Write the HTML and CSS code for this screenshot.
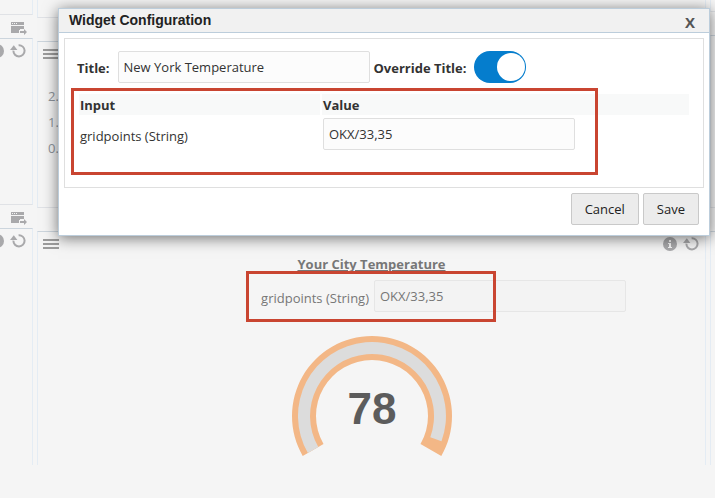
FILE: index.html
```html
<!DOCTYPE html>
<html lang="en">
<head>
    <meta charset="UTF-8">
    <meta name="viewport" content="width=device-width, initial-scale=1.0">
    <title>Widget Configuration</title>
    <link rel="stylesheet" href="styles.css">
</head>
<body>
    <svg class="sprite" aria-hidden="true">
        <symbol id="refresh" viewBox="0 0 16 14">
            <path d="M8.6 1.2a5.6 5.6 0 1 1-5.2 5.4" fill="none" stroke="currentColor" stroke-width="2"/>
            <path d="M0 6L3.8 1.2 7.4 6z" fill="currentColor"/>
        </symbol>
        <symbol id="info" viewBox="0 0 14 14">
            <circle cx="7" cy="7" r="7" fill="currentColor"/>
            <path d="M6 3h2v2H6zM5 6h3v4h1v1H5v-1h1V7H5z" fill="#f5f5f5"/>
        </symbol>
        <symbol id="menu" viewBox="0 0 16 10">
            <path d="M0 1h16M0 5h16M0 9h16" stroke="currentColor" stroke-width="2"/>
        </symbol>
        <symbol id="popout" viewBox="0 0 16 13">
            <path d="M0 0h13v3H0zM0 4h13v3H9v1H8v3H0z" fill="currentColor"/>
            <path d="M1 1h1v1H1zM3 1h1v1H3zM5 1h1v1H5z" fill="#f5f5f5"/>
            <path d="M9 9h4V7l3 3-3 3v-2H9z" fill="currentColor"/>
        </symbol>
    </svg>

    <main class="dashboard">
        <div class="column column-left">
            <section class="widget stub"></section>
            <div class="widget-bar">
                <button class="icon-btn" aria-label="Open"><svg width="16" height="13"><use href="#popout"/></svg></button>
            </div>
            <section class="widget medium">
                <div class="tools">
                    <button class="icon-btn" aria-label="Info"><svg width="14" height="14"><use href="#info"/></svg></button>
                    <button class="icon-btn" aria-label="Refresh"><svg width="16" height="14"><use href="#refresh"/></svg></button>
                </div>
            </section>
            <div class="widget-bar">
                <button class="icon-btn" aria-label="Open"><svg width="16" height="13"><use href="#popout"/></svg></button>
            </div>
            <section class="widget last">
                <div class="tools">
                    <button class="icon-btn" aria-label="Info"><svg width="14" height="14"><use href="#info"/></svg></button>
                    <button class="icon-btn" aria-label="Refresh"><svg width="16" height="14"><use href="#refresh"/></svg></button>
                </div>
            </section>
        </div>

        <div class="column column-main">
            <section class="widget stub"></section>
            <div class="widget-bar"></div>
            <section class="widget medium">
                <div class="tools">
                    <button class="icon-btn menu" aria-label="Menu"><svg width="16" height="10"><use href="#menu"/></svg></button>
                </div>
                <div class="axis">
                    <span>2.4</span>
                    <span>1.6</span>
                    <span>0.8</span>
                </div>
            </section>
            <div class="widget-bar"></div>
            <section class="widget last">
                <div class="tools">
                    <button class="icon-btn menu" aria-label="Menu"><svg width="16" height="10"><use href="#menu"/></svg></button>
                    <button class="icon-btn" aria-label="Info"><svg width="14" height="14"><use href="#info"/></svg></button>
                    <button class="icon-btn" aria-label="Refresh"><svg width="16" height="14"><use href="#refresh"/></svg></button>
                </div>
                <h2 class="widget-title">Your City Temperature</h2>
                <div class="param">
                    <label for="city-gridpoints">gridpoints (String)</label>
                    <input type="text" class="text-input" id="city-gridpoints" value="OKX/33,35">
                    <div class="highlight highlight-param"></div>
                </div>
                <svg class="gauge" width="160" height="120" viewBox="0 0 160 120" role="img" aria-label="78">
                    <path d="M10.7 120A80 80 0 1 1 149.3 120L128.5 108A56 56 0 1 0 31.5 108z" fill="#f3b786"/>
                    <path d="M15.9 117A74 74 0 1 1 149.5 105.3L138.3 101.2A62 62 0 1 0 26.3 111z" fill="#dcdcdc"/>
                    <text x="80" y="88" text-anchor="middle">78</text>
                </svg>
            </section>
        </div>

        <div class="column column-right">
            <section class="widget stub"></section>
            <div class="widget-bar"></div>
            <section class="widget medium"></section>
            <div class="widget-bar"></div>
            <section class="widget last"></section>
        </div>
    </main>

    <div class="dialog" role="dialog" aria-labelledby="dialog-title">
        <div class="dialog-header">
            <h1 id="dialog-title">Widget Configuration</h1>
            <button class="close" aria-label="Close">X</button>
        </div>
        <div class="dialog-body">
            <div class="title-row">
                <label for="title">Title:</label>
                <input type="text" class="text-input" id="title" value="New York Temperature">
                <label for="override">Override Title:</label>
                <input type="checkbox" class="switch" id="override" checked>
            </div>
            <div class="params">
                <table>
                    <thead>
                        <tr>
                            <th class="name">Input</th>
                            <th>Value</th>
                        </tr>
                    </thead>
                    <tbody>
                        <tr>
                            <td><label for="gridpoints">gridpoints (String)</label></td>
                            <td><input type="text" class="text-input" id="gridpoints" value="OKX/33,35"></td>
                        </tr>
                    </tbody>
                </table>
                <div class="highlight highlight-table"></div>
            </div>
        </div>
        <div class="dialog-footer">
            <button class="btn">Cancel</button>
            <button class="btn">Save</button>
        </div>
    </div>
</body>
</html>
```
FILE: styles.css
```css
* {
    box-sizing: border-box;
}
body {
    margin: 0;
    background-color: #f5f5f5;
    font-family: "Open Sans", "Noto Sans", sans-serif;
    font-size: 13px;
    line-height: 18px;
    color: #333;
    overflow-x: hidden;
}
.sprite {
    display: none;
}
button, input {
    font: inherit;
    color: inherit;
}

/* dashboard */
.dashboard {
    display: grid;
    grid-template-columns: 33px 1fr 5px;
    gap: 4px;
    color: #777;
}
.column {
    display: flex;
    flex-direction: column;
    min-width: 0;
    overflow: hidden;
}
.widget {
    border: 1px solid #e4ecf4;
    border-top-color: #ccd5dd;
    border-bottom-color: #e0e2e6;
}
.column-left .widget {
    border-left: none;
}
.column-right .widget {
    border-right: none;
}
.stub {
    height: 18px;
    border-top: none;
}
.column-left .stub {
    height: 15px;
}
.column-right .stub {
    height: 12px;
}
.widget-bar {
    height: 23px;
    padding: 7px 6px 0;
    display: flex;
    justify-content: flex-end;
    align-items: flex-start;
}
.medium {
    height: 167px;
}
.column-right .medium {
    height: 173px;
}
.last {
    min-height: 234px;
    border-bottom: none;
    flex: 1;
}
.tools {
    display: flex;
    justify-content: flex-end;
    align-items: center;
    gap: 6px;
    padding: 4px 6px 0;
    height: 20px;
}
.column-main .tools {
    height: 23px;
    padding: 1px 6px 0 5px;
}
.icon-btn {
    flex: none;
    padding: 0;
    border: none;
    background: none;
    color: #a9a9ab;
    cursor: pointer;
}
.icon-btn svg {
    display: block;
}
.icon-btn.menu {
    margin-right: auto;
    color: #9c9c9c;
}
.axis {
    display: flex;
    flex-direction: column;
    gap: 8px;
    padding: 22px 10px;
    color: #8f959c;
}
.widget-title {
    margin: 0;
    font-size: 13px;
    line-height: 18px;
    text-align: center;
    text-decoration: underline;
}
.param {
    position: relative;
    display: grid;
    grid-template-columns: 1fr 1fr;
    gap: 5px;
    padding-top: 7px;
}
.param label {
    padding-top: 9px;
    text-align: right;
}
.param .text-input {
    background-color: #f3f3f3;
    border-color: #e6e6e6;
}
.gauge {
    display: block;
    margin: 24px auto 0;
}
.gauge text {
    font-family: "Liberation Sans", Arial, sans-serif;
    font-size: 44px;
    font-weight: bold;
    fill: #5c5c5c;
}
.text-input {
    width: 252px;
    height: 32px;
    padding: 0 5px;
    background-color: #fcfcfc;
    border: 1px solid #dfdfdf;
    border-radius: 2px;
}

/* red frames */
.highlight {
    position: absolute;
    border: 3px solid #c94531;
    pointer-events: none;
}
.highlight-param {
    top: -2px;
    left: calc(50% - 126px);
    width: 250px;
    height: 51px;
}
.highlight-table {
    top: -4px;
    left: -6px;
    width: 527px;
    height: 87px;
}

/* dialog */
.dialog {
    position: absolute;
    top: 8px;
    left: 58px;
    right: 5px;
    background-color: #fff;
    border: 1px solid #bccddb;
    box-shadow: 0 2px 14px rgba(0, 0, 0, 0.55);
}
.dialog-header {
    display: flex;
    justify-content: space-between;
    align-items: center;
    height: 24px;
    padding: 0 10px;
    background-color: #f1f1f1;
    border-bottom: 1px solid #bccddb;
    font-family: "Liberation Sans", Arial, sans-serif;
}
.dialog-header h1 {
    margin: 0;
    padding-bottom: 2px;
    font-size: 14px;
    line-height: 20px;
    color: #222;
}
.close {
    padding: 2px 4px 0;
    border: none;
    background: none;
    font-family: "Open Sans", "Noto Sans", sans-serif;
    font-size: 15px;
    font-weight: bold;
    color: #555;
    cursor: pointer;
}
.dialog-body {
    margin: 5px 5px 0;
    padding: 12px 12px 34px;
    border: 1px solid #dfdfdf;
}
.title-row {
    display: flex;
    align-items: center;
    gap: 8px;
}
.title-row label {
    padding-top: 2px;
    font-weight: bold;
}
.title-row .text-input {
    margin-right: -4px;
}
.switch {
    appearance: none;
    width: 52px;
    height: 32px;
    margin: 0;
    padding: 2px;
    display: flex;
    border-radius: 16px;
    background-color: #bbb;
    cursor: pointer;
}
.switch::before {
    content: "";
    width: 28px;
    height: 28px;
    border-radius: 50%;
    background-color: #fff;
}
.switch:checked {
    justify-content: flex-end;
    padding-right: 1px;
    background-color: #057dcd;
}
.params {
    position: relative;
    margin-top: 9px;
}
table {
    width: 100%;
    border-spacing: 2px;
}
th, td {
    padding: 1px;
    text-align: left;
}
th {
    height: 21px;
    background-color: #f8f9f9;
}
.name {
    width: 241px;
}
td {
    line-height: 0;
}
td label {
    display: block;
    padding-top: 3px;
    line-height: 18px;
}
.dialog-footer {
    display: flex;
    justify-content: flex-end;
    gap: 4px;
    padding: 5px 10px 10px;
}
.btn {
    height: 32px;
    padding: 0 13px;
    background-color: #ececec;
    border: 1px solid #c9c9c9;
    border-radius: 2px;
    color: #222;
    cursor: pointer;
}
```
